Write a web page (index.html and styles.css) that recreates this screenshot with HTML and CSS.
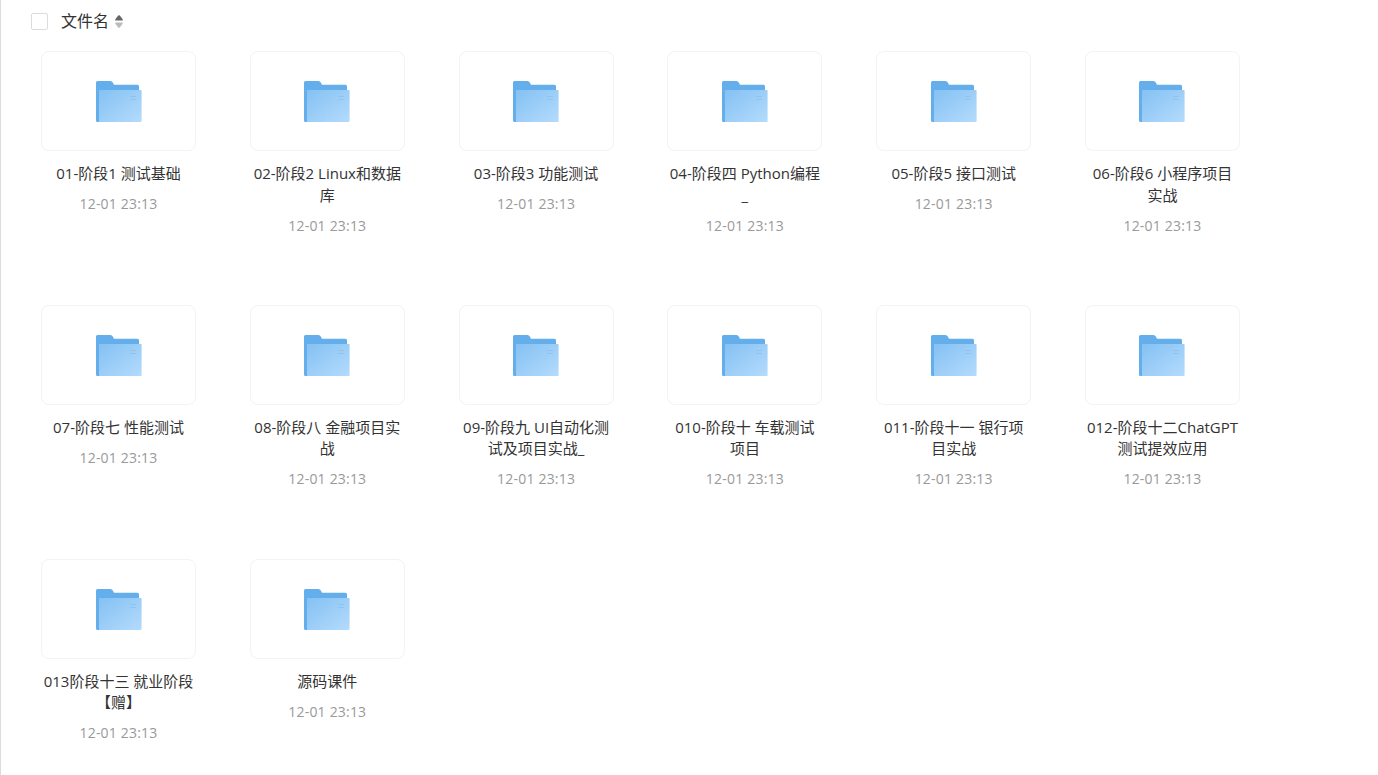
FILE: index.html
```html
<!DOCTYPE html>
<html lang="zh-CN">

<head>
    <meta charset="UTF-8">
    <title>文件列表</title>
    <link rel="stylesheet" href="styles.css">
</head>

<body>
    <svg class="defs" width="0" height="0">
        <defs>
            <linearGradient id="front" x1="0" y1="0" x2="1" y2="1">
                <stop offset="0" stop-color="#84c1f3" />
                <stop offset="1" stop-color="#b4dbfc" />
            </linearGradient>
            <symbol id="folder" viewBox="0 0 46 42">
                <path d="M1.5 0H14.5Q16 0 16.8 1.5L18 3.8H41.5Q43 3.8 43 5.3V41H1.5Q0 41 0 39.5V1.5Q0 0 1.5 0Z" fill="#65aeec" />
                <path d="M3 9H44.6Q45.6 9 45.6 10V40Q45.6 41 44.6 41H3Z" fill="url(#front)" />
                <path d="M34 15H40V16H34ZM34 18H40V19H34Z" fill="#8fc4f1" />
            </symbol>
        </defs>
    </svg>

    <div class="list-head">
        <span class="checkbox"></span>
        <span class="head-label">文件名</span>
        <svg class="sort" viewBox="0 0 8 13">
            <path d="M3.2 .5Q4 0 4.8 .5L7.6 4.2Q8.2 5.5 7 5.5H1Q-.2 5.5 .4 4.2Z" fill="#666" />
            <path d="M1 7.5H7Q8.2 7.5 7.6 8.8L4.8 12.5Q4 13 3.2 12.5L.4 8.8Q-.2 7.5 1 7.5Z" fill="#bbb" />
        </svg>
    </div>

    <div class="file-grid">
        <div class="file">
            <div class="thumb"><svg class="folder"><use href="#folder" /></svg></div>
            <p class="file-name">01-阶段1 测试基础</p>
            <p class="file-date">12-01 23:13</p>
        </div>
        <div class="file">
            <div class="thumb"><svg class="folder"><use href="#folder" /></svg></div>
            <p class="file-name">02-阶段2 Linux和数据库</p>
            <p class="file-date">12-01 23:13</p>
        </div>
        <div class="file">
            <div class="thumb"><svg class="folder"><use href="#folder" /></svg></div>
            <p class="file-name">03-阶段3 功能测试</p>
            <p class="file-date">12-01 23:13</p>
        </div>
        <div class="file">
            <div class="thumb"><svg class="folder"><use href="#folder" /></svg></div>
            <p class="file-name">04-阶段四 Python编程_</p>
            <p class="file-date">12-01 23:13</p>
        </div>
        <div class="file">
            <div class="thumb"><svg class="folder"><use href="#folder" /></svg></div>
            <p class="file-name">05-阶段5 接口测试</p>
            <p class="file-date">12-01 23:13</p>
        </div>
        <div class="file">
            <div class="thumb"><svg class="folder"><use href="#folder" /></svg></div>
            <p class="file-name">06-阶段6 小程序项目实战</p>
            <p class="file-date">12-01 23:13</p>
        </div>
        <div class="file">
            <div class="thumb"><svg class="folder"><use href="#folder" /></svg></div>
            <p class="file-name">07-阶段七 性能测试</p>
            <p class="file-date">12-01 23:13</p>
        </div>
        <div class="file">
            <div class="thumb"><svg class="folder"><use href="#folder" /></svg></div>
            <p class="file-name">08-阶段八 金融项目实战</p>
            <p class="file-date">12-01 23:13</p>
        </div>
        <div class="file">
            <div class="thumb"><svg class="folder"><use href="#folder" /></svg></div>
            <p class="file-name">09-阶段九 UI自动化测试及项目实战_</p>
            <p class="file-date">12-01 23:13</p>
        </div>
        <div class="file">
            <div class="thumb"><svg class="folder"><use href="#folder" /></svg></div>
            <p class="file-name">010-阶段十 车载测试项目</p>
            <p class="file-date">12-01 23:13</p>
        </div>
        <div class="file">
            <div class="thumb"><svg class="folder"><use href="#folder" /></svg></div>
            <p class="file-name">011-阶段十一 银行项目实战</p>
            <p class="file-date">12-01 23:13</p>
        </div>
        <div class="file">
            <div class="thumb"><svg class="folder"><use href="#folder" /></svg></div>
            <p class="file-name">012-阶段十二ChatGPT测试提效应用</p>
            <p class="file-date">12-01 23:13</p>
        </div>
        <div class="file">
            <div class="thumb"><svg class="folder"><use href="#folder" /></svg></div>
            <p class="file-name">013阶段十三 就业阶段【赠】</p>
            <p class="file-date">12-01 23:13</p>
        </div>
        <div class="file">
            <div class="thumb"><svg class="folder"><use href="#folder" /></svg></div>
            <p class="file-name">源码课件</p>
            <p class="file-date">12-01 23:13</p>
        </div>
    </div>
</body>

</html>
```

FILE: styles.css
```css
html {
    height: 100%;
}

body {
    margin: 0;
    height: 100%;
    box-sizing: border-box;
    overflow: hidden;
    background-color: #fff;
    border-left: 1px solid #dcdcdc;
    font-family: "Open Sans", "Noto Sans CJK SC", sans-serif;
    color: #333;
}

.defs {
    display: block;
    height: 0;
}

.list-head {
    display: flex;
    align-items: center;
    height: 42px;
    padding-left: 30px;
}

.checkbox {
    width: 15px;
    height: 15px;
    border: 1px solid #dcdcdc;
    border-radius: 2px;
}

.head-label {
    margin-left: 13px;
    font-size: 16px;
    line-height: 22px;
    color: #333;
}

.sort {
    width: 8px;
    height: 13px;
    margin-left: 6px;
}

.file-grid {
    display: grid;
    grid-template-columns: repeat(6, 155px);
    grid-auto-rows: 253.75px;
    column-gap: 53.8px;
    padding: 9.2px 0 0 40px;
}

.thumb {
    display: flex;
    align-items: center;
    justify-content: center;
    height: 100px;
    box-sizing: border-box;
    border: 1px solid #f3f3f5;
    border-radius: 8px;
}

.folder {
    display: block;
    width: 46px;
    height: 42px;
    margin-top: 2px;
}

.file-name {
    margin: 11.9px 0 0;
    padding: 0 .5px;
    font-size: 15px;
    line-height: 21.5px;
    color: #333;
    text-align: center;
    word-break: break-all;
}

.file-date {
    margin: 8.6px 0 0;
    font-size: 14px;
    line-height: 22px;
    letter-spacing: .2px;
    color: #999;
    text-align: center;
}
```
